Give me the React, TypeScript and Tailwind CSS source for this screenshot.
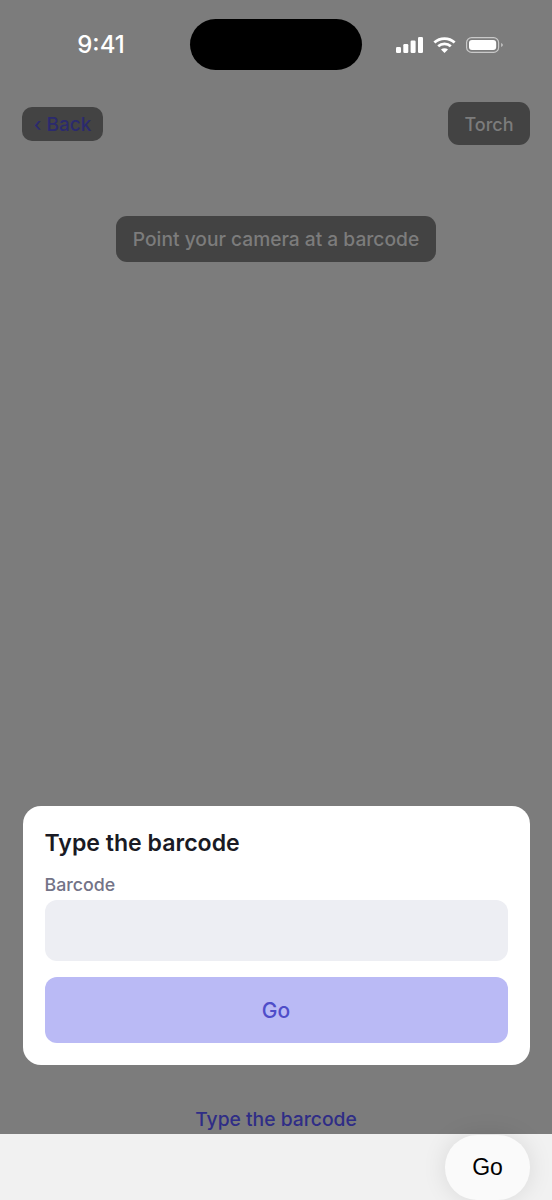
export default function App() {
  return (
    <div className="flex h-[1200px] w-[552px] flex-col overflow-hidden bg-[#7c7c7c] font-['Inter',sans-serif]">
      <div className="mt-[19px] flex h-[51px] items-center">
        <div className="w-[190px] pl-[12px] text-center text-[24px] font-medium leading-none text-white">9:41</div>
        <div className="h-[51px] w-[172px] rounded-[26px] bg-black" />
        <div className="ml-[34px] flex items-center">
          <svg width="27" height="16" viewBox="0 0 27 16" fill="white">
            <rect x="0" y="10" width="5" height="6" rx="1.2" />
            <rect x="7.3" y="7" width="5" height="9" rx="1.2" />
            <rect x="14.6" y="3.5" width="5" height="12.5" rx="1.2" />
            <rect x="22" y="0" width="5" height="16" rx="1.2" />
          </svg>
          <svg className="ml-[10px]" width="23" height="16" viewBox="0 0 23 16" fill="none" stroke="white" strokeWidth="2.8">
            <path d="M1.4 5.6 C7 0.2 16 0.2 21.6 5.6" />
            <path d="M5.2 9.2 C8.6 6.2 14.4 6.2 17.8 9.2" />
            <path d="M11.5 16 L8 12.4 C10 10.8 13 10.8 15 12.4 Z" fill="white" stroke="none" />
          </svg>
          <svg className="ml-[10px]" width="37" height="16" viewBox="0 0 37 16" fill="none">
            <rect x="0.6" y="0.6" width="32" height="14.8" rx="5" stroke="#c9c9c9" strokeWidth="1.2" />
            <rect x="3" y="3" width="27.2" height="10" rx="3" fill="white" />
            <path d="M35.2 6 C36.4 6.5 36.8 7.2 36.8 8 C36.8 8.8 36.4 9.5 35.2 10 Z" fill="#c9c9c9" />
          </svg>
        </div>
      </div>

      <div className="mt-[32px] flex h-[43px] items-center justify-between px-[22px]">
        <div className="flex h-[34px] w-[81px] items-center justify-center rounded-[10px] bg-[#434343] pt-[3px] text-[19px] font-medium text-[#2b2a6e]">
          ‹ Back
        </div>
        <div className="flex h-[43px] w-[82px] items-center justify-center rounded-[11px] bg-[#434343] pt-[1px] text-[18px] font-medium text-[#7c7c7c]">
          Torch
        </div>
      </div>

      <div className="mt-[71px] flex justify-center">
        <div className="flex h-[46px] w-[320px] items-center justify-center rounded-[11px] bg-[#434343] text-[19.2px] font-medium text-[#7c7c7c]">
          Point your camera at a barcode
        </div>
      </div>

      <div className="flex-1" />

      <div className="mx-[22.5px] flex h-[259px] flex-col rounded-[18px] bg-white px-[22px] pt-[22px]">
        <div className="text-[23.1px] font-semibold leading-[30px] text-[#1a1a24]">Type the barcode</div>
        <div className="mt-[17px] text-[17.8px] font-medium leading-[20px] text-[#737387]">Barcode</div>
        <div className="mt-[5px] h-[61px] rounded-[12px] bg-[#edeef3]" />
        <div className="mt-[16px] flex h-[66px] items-center justify-center rounded-[12px] bg-[#babaf5] pt-[1px] text-[21px] font-[550] text-[#4f4dc9]">
          Go
        </div>
      </div>

      <div className="mt-[42px] h-[27px] text-center text-[19.3px] font-medium leading-[24px] text-[#2f2d86]">
        Type the barcode
      </div>

      <div className="flex h-[66px] items-center justify-end bg-[#f1f1f1] pr-[22px]">
        <div className="mt-[1px] flex h-[65px] w-[85px] items-center justify-center rounded-[32px] bg-[#fafafa] font-['Liberation_Sans',sans-serif] text-[23px] text-black shadow-[0_0_24px_rgba(0,0,0,0.1)]">
          Go
        </div>
      </div>
    </div>
  );
}
